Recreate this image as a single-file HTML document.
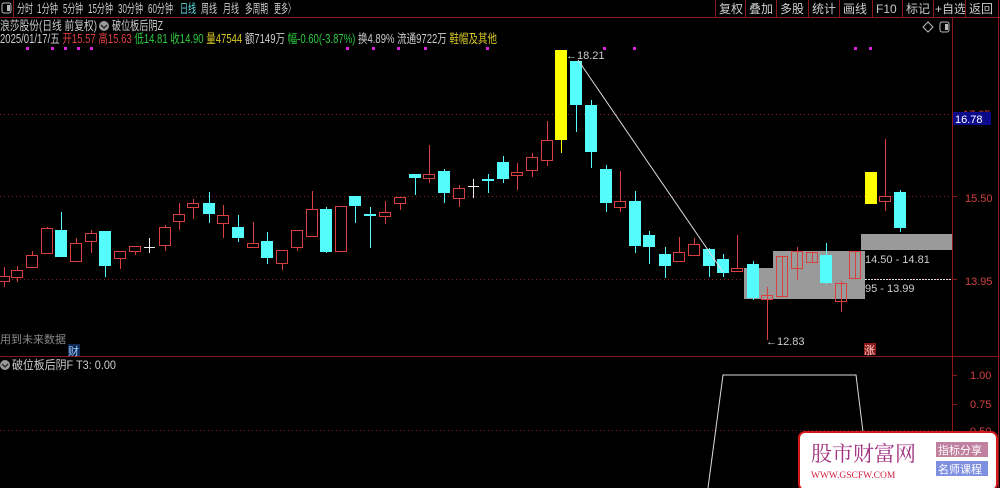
<!DOCTYPE html>
<html><head><meta charset="utf-8"><style>
body{margin:0;background:#000;width:1000px;height:488px;overflow:hidden;font-family:"Liberation Sans","Noto Sans CJK SC",sans-serif}
svg{display:block}
text{font-family:"Liberation Sans","Noto Sans CJK SC",sans-serif}
</style></head><body>
<svg width="1000" height="488" viewBox="0 0 1000 488" xmlns="http://www.w3.org/2000/svg">
<rect width="1000" height="488" fill="#000"/>
<line x1="0" y1="17.5" x2="1000" y2="17.5" stroke="#8a1a1a"/>
<line x1="13.5" y1="0" x2="13.5" y2="17" stroke="#8a1a1a"/>
<rect x="2" y="3" width="9" height="10" rx="2" fill="none" stroke="#bbb"/><rect x="7" y="5" width="3" height="6" fill="#bbb"/>
<g font-size="12.5" fill="#ccc">
<text x="17" y="13" textLength="16" lengthAdjust="spacingAndGlyphs">分时</text><text x="37" y="13" textLength="21" lengthAdjust="spacingAndGlyphs">1分钟</text><text x="63" y="13" textLength="20" lengthAdjust="spacingAndGlyphs">5分钟</text><text x="88" y="13" textLength="25" lengthAdjust="spacingAndGlyphs">15分钟</text><text x="118" y="13" textLength="25" lengthAdjust="spacingAndGlyphs">30分钟</text><text x="148" y="13" textLength="25" lengthAdjust="spacingAndGlyphs">60分钟</text><text x="180" y="13" fill="#5ce0e8" textLength="16" lengthAdjust="spacingAndGlyphs">日线</text><text x="201" y="13" textLength="16" lengthAdjust="spacingAndGlyphs">周线</text><text x="223" y="13" textLength="16" lengthAdjust="spacingAndGlyphs">月线</text><text x="245" y="13" textLength="23" lengthAdjust="spacingAndGlyphs">多周期</text><text x="274" y="13" textLength="21" lengthAdjust="spacingAndGlyphs">更多〉</text>
</g>
<g font-size="12" fill="#ccc">
<text x="719" y="13">复权</text><text x="749" y="13">叠加</text><text x="780" y="13">多股</text><text x="812" y="13">统计</text><text x="843" y="13">画线</text><text x="876" y="13">F10</text><text x="906" y="13">标记</text><text x="935" y="13">+自选</text><text x="969" y="13">返回</text>
</g>
<g stroke="#8a1a1a"><line x1="715.5" y1="0" x2="715.5" y2="17"/><line x1="745.5" y1="0" x2="745.5" y2="17"/><line x1="776.5" y1="0" x2="776.5" y2="17"/><line x1="808.5" y1="0" x2="808.5" y2="17"/><line x1="839.5" y1="0" x2="839.5" y2="17"/><line x1="872.5" y1="0" x2="872.5" y2="17"/><line x1="902.5" y1="0" x2="902.5" y2="17"/><line x1="933.5" y1="0" x2="933.5" y2="17"/><line x1="965.5" y1="0" x2="965.5" y2="17"/><line x1="998.5" y1="0" x2="998.5" y2="488"/></g>
<line x1="952.5" y1="17" x2="952.5" y2="488" stroke="#8a1a1a"/>
<line x1="0" y1="356.5" x2="998" y2="356.5" stroke="#8a1a1a"/>
<polygon points="928,22 933,27 928,32 923,27" fill="none" stroke="#bbb"/>
<rect x="940" y="22" width="9" height="10" rx="2" fill="none" stroke="#bbb"/><rect x="945" y="24" width="3" height="6" fill="#bbb"/>
<g font-size="12.5">
<text x="0" y="30" fill="#ccc" textLength="97" lengthAdjust="spacingAndGlyphs">浪莎股份(日线 前复权)</text>
<circle cx="104" cy="26" r="5" fill="#999"/><path d="M101,25 l3,3 l3,-3" stroke="#222" fill="none" stroke-width="1.3"/>
<text x="112" y="30" fill="#ccc" textLength="51" lengthAdjust="spacingAndGlyphs">破位板后阴Z</text>
<text x="0" y="43" fill="#ccc" textLength="497" lengthAdjust="spacingAndGlyphs">2025/01/17/五 <tspan fill="#e04040">开15.57 高15.63 </tspan><tspan fill="#2ecc40">低14.81 收14.90 </tspan><tspan fill="#d8c828">量47544 </tspan><tspan fill="#ccc">额7149万 </tspan><tspan fill="#2ecc40">幅-0.60(-3.87%) </tspan><tspan fill="#ccc">换4.89% 流通9722万 </tspan><tspan fill="#d8c828">鞋帽及其他</tspan></text>
</g>
<g fill="#e020e0">
<rect x="26" y="47" width="3" height="3"/><rect x="51" y="47" width="3" height="3"/><rect x="64" y="47" width="3" height="3"/><rect x="77" y="47" width="3" height="3"/><rect x="90" y="47" width="3" height="3"/><rect x="346" y="47" width="3" height="3"/><rect x="372" y="47" width="3" height="3"/><rect x="397" y="47" width="3" height="3"/><rect x="424" y="47" width="3" height="3"/><rect x="486" y="47" width="3" height="3"/><rect x="603" y="47" width="3" height="3"/><rect x="633" y="47" width="3" height="3"/><rect x="854" y="47" width="3" height="3"/><rect x="869" y="47" width="3" height="3"/>
</g>
<g stroke="#8a2020" stroke-dasharray="1,3">
<line x1="0" y1="114.5" x2="952" y2="114.5"/><line x1="0" y1="196.5" x2="952" y2="196.5"/><line x1="0" y1="279.5" x2="952" y2="279.5"/><line x1="0" y1="430.5" x2="952" y2="430.5"/>
</g>
<rect x="861" y="234" width="91" height="16" fill="#9a9a9a"/>
<polygon points="744,268 773,268 773,251 865,251 865,299 744,299" fill="#9a9a9a"/>
<path stroke="#d84040" fill="none" d="M4.5 267V287M17.5 266V282M32.5 251V267M47.5 227V254M76.5 238V261M91.5 230V253M120.5 251V269M135.5 246V255M165.5 225V251M179.5 203V230M193.5 199V219M223.5 205V238M253.5 222V247M282.5 250V270M297.5 230V251M312.5 191V237M341.5 206V251M385.5 201V224M400.5 197V210M429.5 145V183M459.5 185V207M517.5 163V190M532.5 153V177M547.5 121V166M620.5 171V212M679.5 237V261M694.5 238V255M737.5 235V271M767.5 287V340M782.5 256V296M797.5 247V280M812.5 252V262M841.5 281V312M855.5 251V278M885.5 139V211"/>
<path stroke="#54fcfc" fill="none" d="M61.5 212V257M105.5 231V277M209.5 192V223M238.5 215V242M267.5 232V264M326.5 207V253M355.5 196V223M370.5 207V248M415.5 174V195M444.5 169V203M488.5 174V193M503.5 156V183M576.5 61V132M591.5 100V168M606.5 165V212M635.5 191V253M649.5 231V264M665.5 247V278M709.5 248V277M723.5 254V277M753.5 261V300M826.5 243V284M900.5 190V232"/>
<path stroke="#ffff00" fill="none" d="M561.5 50V153"/>
<path stroke="#eee" fill="none" d="M149.5 238V253M144 247.5H155M473.5 179V198M468 186.5H479"/>
<g fill="#000" stroke="#d84040">
<rect x="-1.5" y="276.5" width="11" height="5"/><rect x="11.5" y="270.5" width="11" height="7"/><rect x="26.5" y="255.5" width="11" height="12"/><rect x="41.5" y="228.5" width="11" height="25"/><rect x="70.5" y="243.5" width="11" height="18"/><rect x="85.5" y="233.5" width="11" height="8"/><rect x="114.5" y="251.5" width="11" height="7"/><rect x="129.5" y="246.5" width="11" height="5"/><rect x="159.5" y="227.5" width="11" height="18"/><rect x="173.5" y="214.5" width="11" height="7"/><rect x="187.5" y="203.5" width="11" height="4"/><rect x="217.5" y="215.5" width="11" height="8"/><rect x="247.5" y="243.5" width="11" height="4"/><rect x="276.5" y="250.5" width="11" height="13"/><rect x="291.5" y="230.5" width="11" height="17"/><rect x="306.5" y="209.5" width="11" height="27"/><rect x="335.5" y="206.5" width="11" height="45"/><rect x="379.5" y="212.5" width="11" height="4"/><rect x="394.5" y="197.5" width="11" height="6"/><rect x="423.5" y="174.5" width="11" height="4"/><rect x="453.5" y="188.5" width="11" height="10"/><rect x="511.5" y="172.5" width="11" height="3"/><rect x="526.5" y="157.5" width="11" height="13"/><rect x="541.5" y="140.5" width="11" height="20"/><rect x="614.5" y="201.5" width="11" height="6"/><rect x="673.5" y="252.5" width="11" height="9"/><rect x="688.5" y="244.5" width="11" height="11"/><rect x="731.5" y="268.5" width="11" height="3"/><rect x="761.5" y="295.5" width="11" height="4" fill="none"/><rect x="776.5" y="256.5" width="11" height="40" fill="none"/><rect x="791.5" y="251.5" width="11" height="17" fill="none"/><rect x="806.5" y="252.5" width="11" height="10" fill="none"/><rect x="835.5" y="283.5" width="11" height="18" fill="none"/><rect x="849.5" y="251.5" width="11" height="27" fill="none"/><rect x="879.5" y="196.5" width="11" height="5"/>
</g>
<g fill="#54fcfc">
<rect x="55" y="230" width="12" height="27"/><rect x="99" y="231" width="12" height="35"/><rect x="203" y="203" width="12" height="11"/><rect x="232" y="227" width="12" height="11"/><rect x="261" y="241" width="12" height="17"/><rect x="320" y="209" width="12" height="43"/><rect x="349" y="196" width="12" height="10"/><rect x="364" y="214" width="12" height="2"/><rect x="409" y="174" width="12" height="4"/><rect x="438" y="171" width="12" height="22"/><rect x="482" y="179" width="12" height="2"/><rect x="497" y="162" width="12" height="17"/><rect x="570" y="61" width="12" height="44"/><rect x="585" y="105" width="12" height="47"/><rect x="600" y="169" width="12" height="34"/><rect x="629" y="201" width="12" height="45"/><rect x="643" y="235" width="12" height="12"/><rect x="659" y="254" width="12" height="12"/><rect x="703" y="249" width="12" height="17"/><rect x="717" y="259" width="12" height="14"/><rect x="747" y="264" width="12" height="34"/><rect x="820" y="255" width="12" height="28"/><rect x="894" y="192" width="12" height="36"/>
</g>
<g fill="#ffff00"><rect x="555" y="50" width="12" height="90"/><rect x="865" y="172" width="12" height="32"/></g>
<line x1="578" y1="60" x2="723" y2="272" stroke="#ddd"/>
<g font-size="11" fill="#ccc">
<text x="566" y="59">←18.21</text><text x="766" y="345">←12.83</text>
<text x="865" y="263">14.50 - 14.81</text><text x="865" y="292">95 - 13.99</text>
<text x="0" y="343" fill="#888">用到未来数据</text>
</g>
<line x1="865" y1="279.5" x2="952" y2="279.5" stroke="#ddd" stroke-dasharray="2,1"/>
<rect x="68" y="344" width="12" height="12" fill="#0e2a55"/><text x="68" y="355" font-size="11" fill="#9cf">财</text>
<rect x="864" y="343" width="12" height="12" fill="#8a1a1a"/><text x="864" y="354" font-size="11" fill="#fcc">涨</text>
<g font-size="11" fill="#d04040">
<text x="963" y="118">17.05</text><text x="965" y="202">15.50</text><text x="965" y="285">13.95</text>
<text x="970" y="379">1.00</text><text x="970" y="408">0.75</text><text x="970" y="435">0.50</text>
</g>
<g stroke="#8a1a1a"><line x1="952" y1="196.5" x2="957" y2="196.5"/><line x1="952" y1="279.5" x2="957" y2="279.5"/><line x1="952" y1="375.5" x2="957" y2="375.5"/><line x1="952" y1="404.5" x2="957" y2="404.5"/></g>
<rect x="953" y="112" width="38" height="13" fill="#0a0a8a"/><text x="955" y="123" font-size="11" fill="#fff">16.78</text>
<circle cx="5" cy="365" r="5" fill="#999"/><path d="M2,364 l3,3 l3,-3" stroke="#222" fill="none" stroke-width="1.3"/>
<text x="12" y="369" font-size="12" fill="#ccc" textLength="104" lengthAdjust="spacingAndGlyphs">破位板后阴F  T3: 0.00</text>
<polyline points="708,488 723,375 856,375 864,440" fill="none" stroke="#ddd"/>
<rect x="799" y="432" width="198" height="58" rx="6" fill="#fff" stroke="#d01818" stroke-width="2"/>
<text x="811" y="461" font-size="21" fill="#a03080" style="font-family:'Liberation Serif','Noto Serif CJK SC',serif">股市财富网</text>
<text x="811" y="478" font-size="9.5" fill="#d02040" style="font-family:'Liberation Serif',serif">WWW.GSCFW.COM</text>
<rect x="936" y="442" width="52" height="15" fill="#c080a0"/><text x="938" y="454" font-size="11" fill="#fff">指标分享</text>
<rect x="936" y="461" width="52" height="15" fill="#8090e0"/><text x="938" y="473" font-size="11" fill="#fff">名师课程</text>
</svg>
</body></html>
